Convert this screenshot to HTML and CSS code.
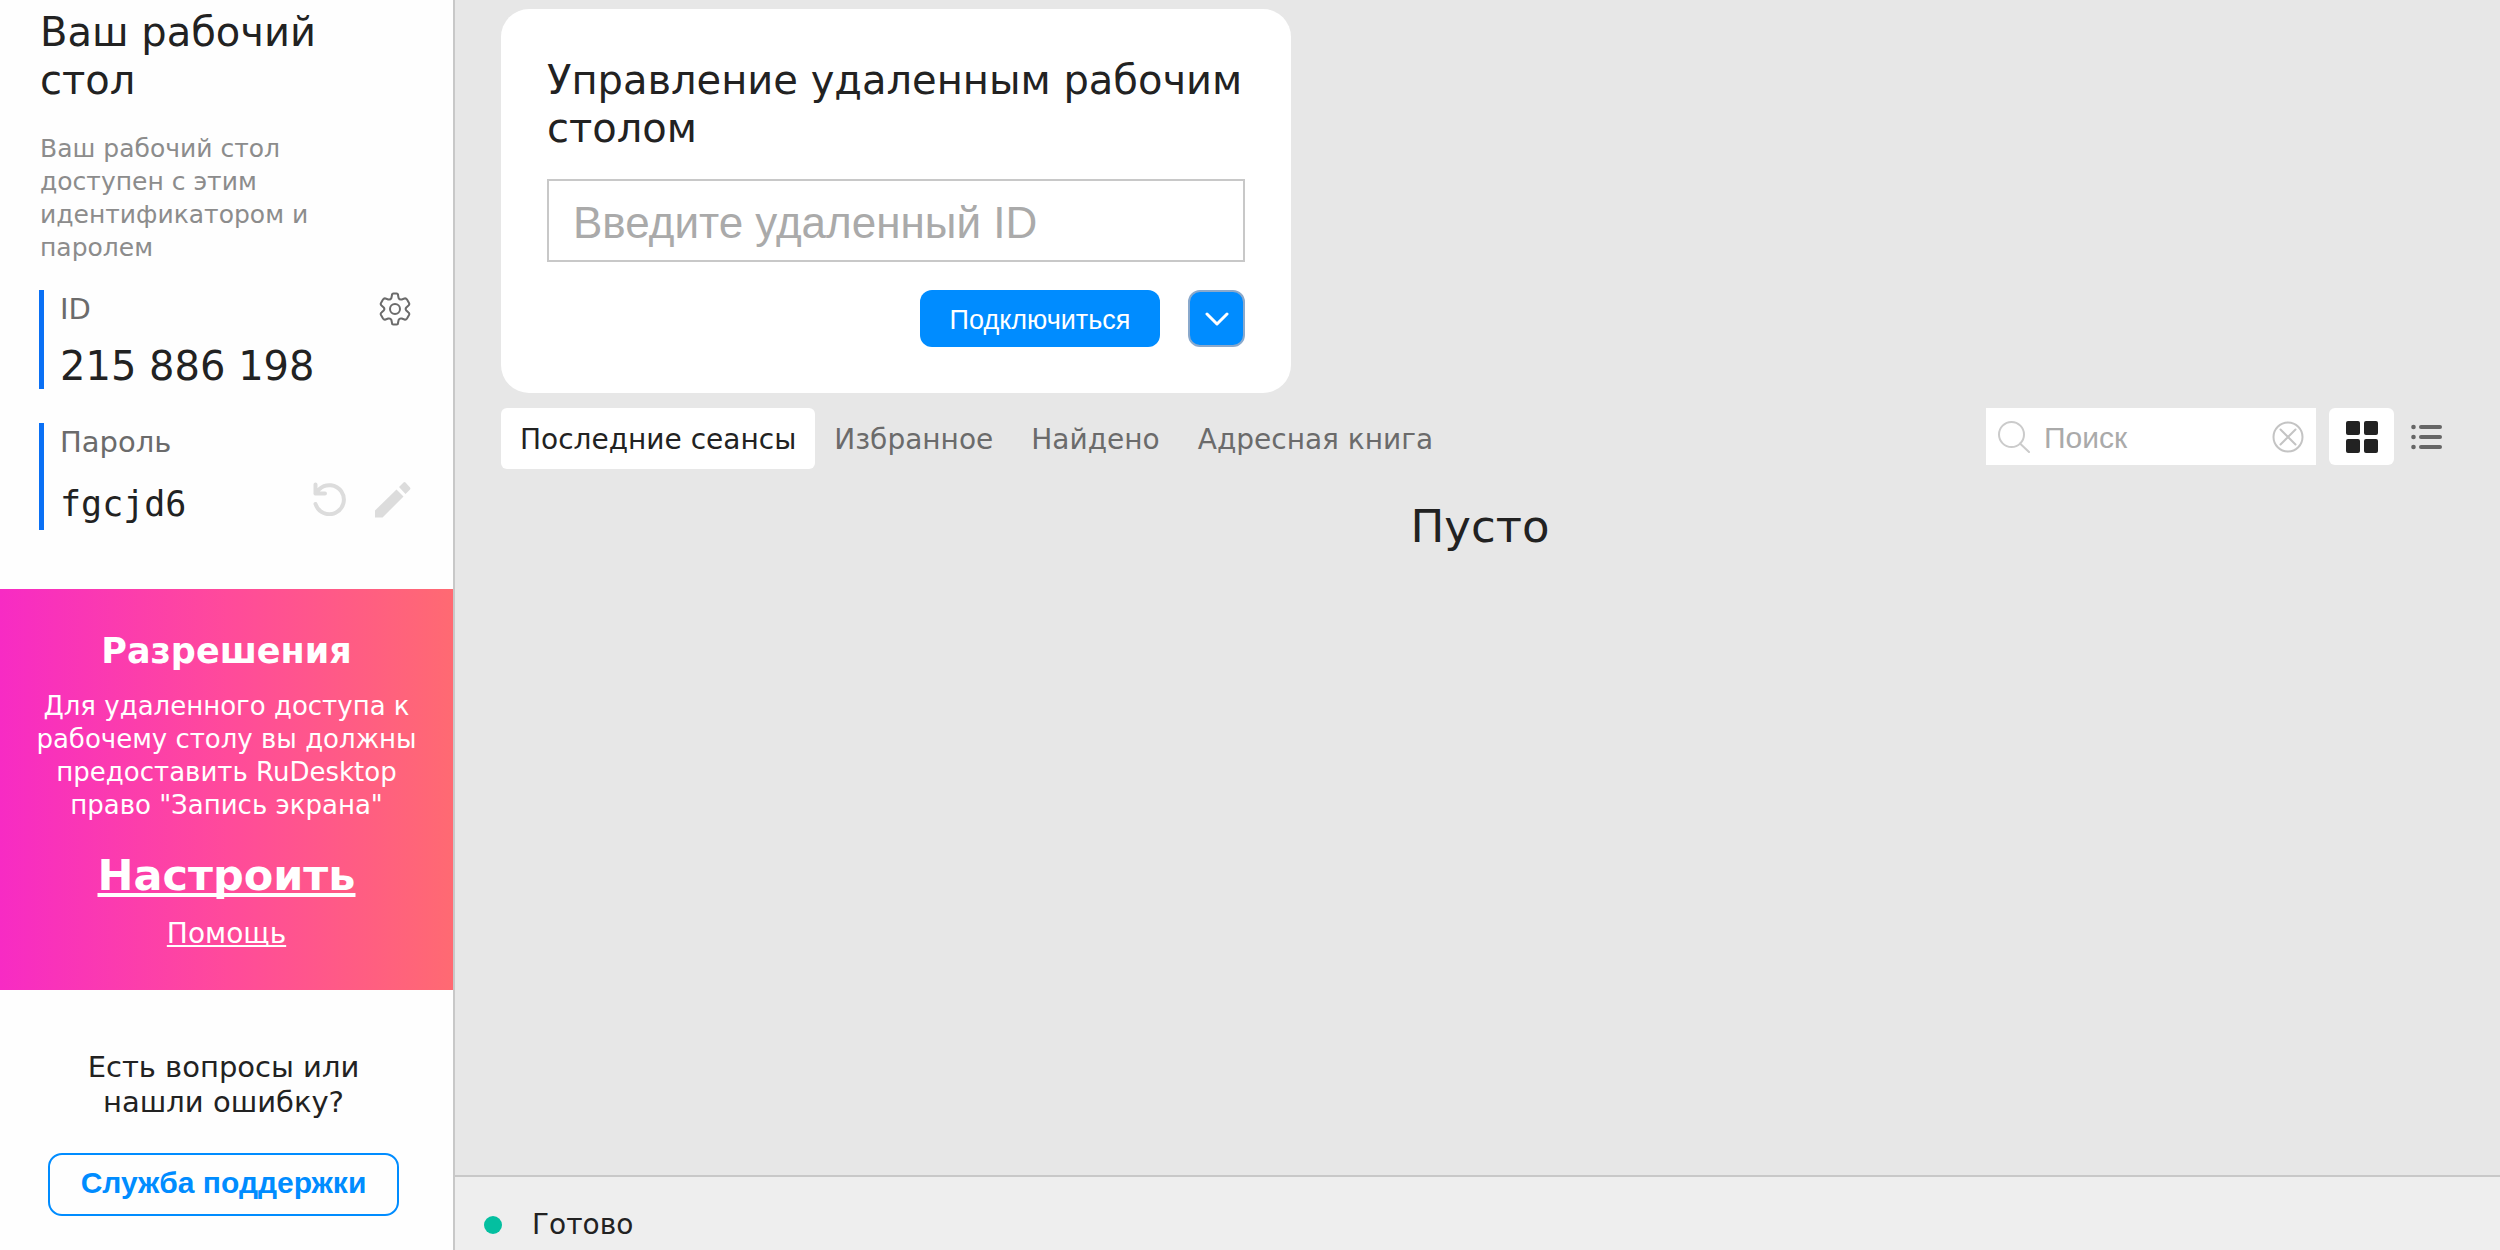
FILE: index.html
```html
<!DOCTYPE html>
<html lang="ru">
<head>
<meta charset="utf-8">
<meta name="viewport" content="width=device-width, initial-scale=1">
<title>RuDesktop</title>
<link rel="stylesheet" href="styles.css">
</head>
<body>
<div class="app">
  <aside class="sidebar">
    <section class="desk">
      <h1 class="title">Ваш рабочий стол</h1>
      <p class="hint">Ваш рабочий стол доступен с этим идентификатором и паролем</p>
      <div class="field">
        <div class="field-row">
          <span class="label">ID</span>
          <button class="icon-btn" type="button" aria-label="Настройки">
            <svg class="gear" viewBox="0 0 32 34" width="32" height="34" fill="none" stroke="#6b6b6b" stroke-width="2" stroke-linejoin="round"><circle cx="16" cy="17" r="5"/><path d="M13 3Q13 1.500 14.500 1.500H17.500Q19 1.500 19 3L19.600 6Q20.500 8 22.700 7.500L25.500 6.500Q27 6 28 7.500L30 11Q30.800 12.500 29.500 13.500L27.300 15.500Q26 17 27.300 18.500L29.500 20.500Q30.800 21.500 30 23L28 26.500Q27 28 25.500 27.500L22.700 26.500Q20.500 26 19.600 28L19 31Q19 32.500 17.500 32.500H14.500Q13 32.500 13 31L12.400 28Q11.500 26 9.300 26.500L6.500 27.500Q5 28 4 26.500L2 23Q1.200 21.500 2.500 20.500L4.700 18.500Q6 17 4.700 15.500L2.500 13.500Q1.200 12.500 2 11L4 7.500Q5 6 6.500 6.500L9.300 7.500Q11.500 8 12.400 6Z"/></svg>
          </button>
        </div>
        <div class="value">215 886 198</div>
      </div>
      <div class="field">
        <div class="field-row"><span class="label">Пароль</span></div>
        <div class="pass-row">
          <span class="password">fgcjd6</span>
          <button class="icon-btn" type="button" aria-label="Обновить пароль">
            <svg viewBox="0 0 34 34" width="34" height="34" fill="none" stroke="#dcdcdc" stroke-width="4" stroke-linecap="round" stroke-linejoin="round"><path d="M2.500 2.500V11.500H12M2.500 11.500L6.500 7A14.500 14.500 0 1 1 2.500 22"/></svg>
          </button>
          <button class="icon-btn" type="button" aria-label="Изменить пароль">
            <svg viewBox="0 0 36 36" width="36" height="36" fill="#dcdcdc"><path d="M0 28.500L21.500 7.500L28.500 14.500L7.500 35.500H0ZM24 5L28.500.500Q29.500-.300 30.500.500L35 5.500Q35.800 6.500 35 7.500L30.500 12Z"/></svg>
          </button>
        </div>
      </div>
    </section>
    <section class="permissions">
      <h2 class="perm-title">Разрешения</h2>
      <p class="perm-text">Для удаленного доступа к рабочему столу вы должны предоставить RuDesktop право "Запись экрана"</p>
      <a class="setup" href="#">Настроить</a>
      <a class="help" href="#">Помощь</a>
    </section>
    <section class="support">
      <p class="question">Есть вопросы или нашли ошибку?</p>
      <button class="support-btn" type="button">Служба поддержки</button>
    </section>
  </aside>
  <div class="workspace">
    <main class="content">
      <form class="card">
        <h2 class="title"><label for="remote-id">Управление удаленным рабочим столом</label></h2>
        <input class="remote-id" id="remote-id" type="text" placeholder="Введите удаленный ID">
        <div class="actions">
          <button class="connect" type="button">Подключиться</button>
          <button class="more" type="button" aria-label="Другие действия">
            <svg viewBox="0 0 24 14" width="24" height="14" fill="none" stroke="#fff" stroke-width="3" stroke-linecap="round" stroke-linejoin="round"><path d="M2 2L12 12L22 2"/></svg>
          </button>
        </div>
      </form>
      <div class="toolbar">
        <nav class="tabs">
          <button class="tab active" type="button">Последние сеансы</button>
          <button class="tab" type="button">Избранное</button>
          <button class="tab" type="button">Найдено</button>
          <button class="tab" type="button">Адресная книга</button>
        </nav>
        <div class="search">
          <svg viewBox="0 0 32 32" width="32" height="32" fill="none" stroke="#cbcbcb" stroke-width="2" stroke-linecap="round"><circle cx="13.500" cy="13.500" r="12.500"/><path d="M22 22.500L31 31"/></svg>
          <input class="search-input" type="text" placeholder="Поиск" aria-label="Поиск">
          <button class="icon-btn" type="button" aria-label="Очистить">
            <svg viewBox="0 0 32 32" width="32" height="32" fill="none" stroke="#c4c4c4" stroke-width="2" stroke-linecap="round"><circle cx="16" cy="16" r="14.500"/><path d="M8.500 8.500L23.500 23.500M23.500 8.500L8.500 23.500"/></svg>
          </button>
        </div>
        <button class="view active" type="button" aria-label="Плитка">
          <svg viewBox="0 0 32 32" width="32" height="32" fill="#222"><rect x="0" y="0" width="14" height="14" rx="2"/><rect x="18" y="0" width="14" height="14" rx="2"/><rect x="0" y="18" width="14" height="14" rx="2"/><rect x="18" y="18" width="14" height="14" rx="2"/></svg>
        </button>
        <button class="view" type="button" aria-label="Список">
          <svg viewBox="0 0 32 26" width="32" height="26" fill="#666"><circle cx="2.500" cy="3" r="2.300"/><circle cx="2.500" cy="13" r="2.300"/><circle cx="2.500" cy="23" r="2.300"/><rect x="8" y="1" width="23" height="4" rx="2"/><rect x="8" y="11" width="23" height="4" rx="2"/><rect x="8" y="21" width="23" height="4" rx="2"/></svg>
        </button>
      </div>
      <p class="empty">Пусто</p>
    </main>
    <footer class="status"><span class="dot"></span>Готово</footer>
  </div>
</div>
</body>
</html>
```
FILE: styles.css
```css
* {
  box-sizing: border-box;
}

body {
  margin: 0;
  background: #e7e7e7;
  color: #222;
  font-family: "DejaVu Sans", Verdana, sans-serif;
  font-size: 28px;
  line-height: 35px;
}

h1, h2, p {
  margin: 0;
  font-weight: 400;
}

button {
  margin: 0;
  padding: 0;
  border: 0;
  background: none;
  color: inherit;
  font: inherit;
  cursor: pointer;
}

svg {
  display: block;
  flex: none;
}

.app {
  display: flex;
  min-height: 100vh;
}

/* Sidebar */
.sidebar {
  flex: none;
  width: 455px;
  border-right: 2px solid #c8c8c8;
  background: #fefefe;
}

.desk {
  padding: 8px 42px 59px 39px;
}

.title {
  font-size: 40px;
  line-height: 48px;
}

.desk .title,
.hint {
  padding-left: 1px;
}

.hint {
  margin: 28px 0 26px;
  color: #8c8c8c;
  font-size: 25px;
  line-height: 33px;
}

.field {
  padding-left: 16px;
  border-left: 5px solid #0a70f5;
}

.field + .field {
  margin-top: 34px;
}

.field-row {
  display: flex;
  justify-content: space-between;
  align-items: center;
  height: 38px;
}

.label {
  color: #6b6b6b;
  font-size: 29px;
}

.value {
  margin-top: 15px;
  font-size: 40px;
  line-height: 46px;
}

.pass-row {
  display: flex;
  align-items: center;
  gap: 28px;
  margin-top: 18px;
  height: 51px;
}

.pass-row .icon-btn {
  align-self: flex-start;
  padding-top: 3px;
}

.password {
  flex: 1;
  font-family: "DejaVu Sans Mono", monospace;
  font-size: 35px;
}

/* Permissions banner */
.permissions {
  display: flex;
  flex-direction: column;
  align-items: center;
  padding: 41px 30px 38px;
  background: linear-gradient(to right, #f72bc4, #ff4a9b 50%, #ff6a72);
  color: #fff;
  text-align: center;
}

.perm-title {
  font-size: 35px;
  font-weight: 700;
  line-height: 42px;
}

.perm-text {
  margin: 18px 0 29px;
  font-size: 26px;
  line-height: 33px;
}

.permissions a {
  color: inherit;
  text-decoration-skip-ink: none;
}

.setup {
  font-size: 43px;
  font-weight: 700;
  line-height: 48px;
}

.help {
  margin-top: 17px;
  line-height: 36px;
}

.support {
  padding: 60px 54px 32px 48px;
  text-align: center;
}

.question {
  font-size: 29px;
}

.support-btn {
  width: 100%;
  height: 63px;
  margin-top: 33px;
  padding-bottom: 4px;
  border: 2px solid #008cff;
  border-radius: 14px;
  color: #008cff;
  font-family: "Liberation Sans", Arial, sans-serif;
  font-size: 30px;
  font-weight: 700;
}

/* Workspace */
.workspace {
  display: flex;
  flex: 1;
  flex-direction: column;
  min-width: 0;
}

.content {
  flex: 1;
  padding: 9px 41px 0 46px;
}

.card {
  width: 790px;
  max-width: 100%;
  padding: 47px 46px 46px;
  border-radius: 28px;
  background: #fff;
}

.remote-id {
  display: block;
  width: 100%;
  height: 83px;
  margin: 27px 0 28px;
  padding: 4px 24px 0;
  border: 2px solid #c8c8c8;
  background: #fff;
  font-family: "Liberation Sans", Arial, sans-serif;
  font-size: 44px;
}

input::placeholder {
  color: #aaa;
  opacity: 1;
}

.actions {
  display: flex;
  justify-content: flex-end;
  gap: 28px;
}

.connect,
.more {
  height: 57px;
  border-radius: 12px;
  background: #008cff;
  color: #fff;
}

.connect {
  width: 240px;
  padding-top: 4px;
  font-family: "Liberation Sans", Arial, sans-serif;
  font-size: 27px;
}

.more {
  display: grid;
  place-items: center;
  width: 57px;
  border: 2px solid #8aa9cc;
}

.toolbar {
  display: flex;
  align-items: flex-start;
  margin-top: 15px;
}

.tabs {
  display: flex;
  flex: 1;
}

.tab {
  height: 61px;
  padding: 2px 19px 0;
  border-radius: 6px;
  color: #6b6b6b;
}

.tab.active {
  background: #fff;
  color: #222;
}

.search {
  display: flex;
  align-items: center;
  width: 330px;
  height: 57px;
  margin-right: 13px;
  padding: 0 12px;
  background: #fff;
}

.search-input {
  flex: 1;
  min-width: 0;
  padding: 2px 14px 0;
  border: 0;
  font-family: "Liberation Sans", Arial, sans-serif;
  font-size: 30px;
}

.view {
  display: grid;
  place-items: center;
  width: 65px;
  height: 57px;
  border-radius: 6px;
}

.view.active {
  background: #fff;
}

.empty {
  margin-top: 30px;
  font-size: 45px;
  line-height: 56px;
  text-align: center;
}

.status {
  display: flex;
  align-items: center;
  gap: 30px;
  height: 75px;
  padding: 22px 29px 0;
  border-top: 2px solid #c8c8c8;
  background: #eee;
}

.dot {
  width: 18px;
  height: 18px;
  border-radius: 50%;
  background: #04bfa0;
}
```
